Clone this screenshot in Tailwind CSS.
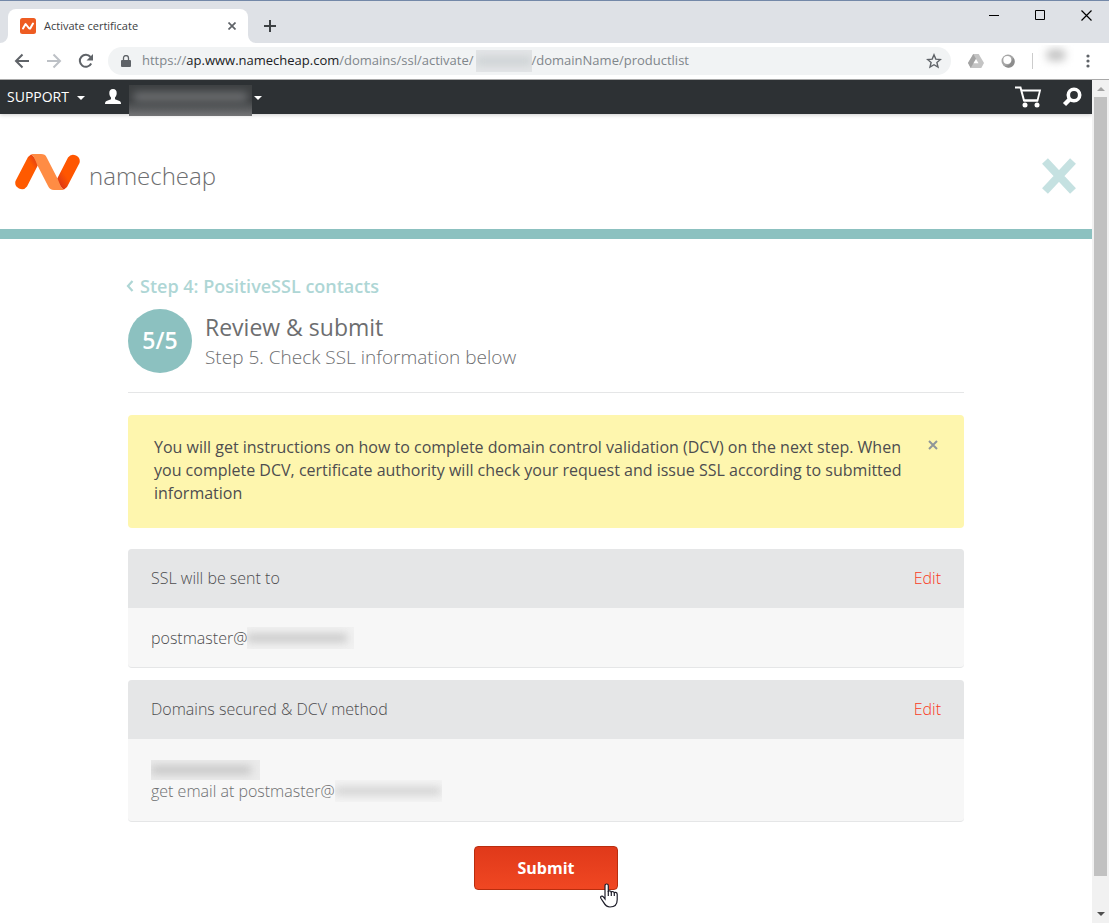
<!DOCTYPE html>
<html lang="en">
<head>
  <meta charset="UTF-8" />
  <meta name="viewport" content="width=device-width, initial-scale=1.0" />
  <title>Activate certificate</title>
  <script src="https://cdn.jsdelivr.net/npm/@tailwindcss/browser@4"></script>
</head>
<body class="flex flex-col h-screen overflow-hidden bg-white font-['Open_Sans',sans-serif] text-[#4d4d4f]">

  <!-- Browser tabs -->
  <div class="flex items-start h-[43px] shrink-0 bg-[#dee1e6] border-t border-[#7388a8]">
    <div class="relative flex items-center ml-2 mt-2 h-[34px] w-60 pl-3 pr-2 bg-white rounded-t-lg text-[11px] text-[#3c4043]">
      <svg class="absolute -left-2 bottom-0 size-2" viewBox="0 0 8 8"><path d="M8 0v8H0a8 8 0 0 0 8-8z" fill="#fff"/></svg>
      <svg class="absolute -right-2 bottom-0 size-2" viewBox="0 0 8 8"><path d="M0 0v8h8a8 8 0 0 1-8-8z" fill="#fff"/></svg>
      <svg class="size-4 mr-2" viewBox="0 0 16 16"><rect width="16" height="16" rx="2.500" fill="#ee5c22"/><path d="M3 10.500 5.600 6l3.600 4.500h1L13 5.500" fill="none" stroke="#fff" stroke-width="2" stroke-linecap="round" stroke-linejoin="round"/></svg>
      <span class="grow">Activate certificate</span>
      <button class="flex items-center justify-center size-4" aria-label="Close tab">
        <svg class="size-2" viewBox="0 0 8 8"><path d="m.5.5 7 7m0-7-7 7" stroke="#5f6368" stroke-width="1.700"/></svg>
      </button>
    </div>
    <button class="ml-4 mt-[19px]" aria-label="New tab">
      <svg class="size-3" viewBox="0 0 12 12"><path d="M6 0v12M0 6h12" stroke="#3c4043" stroke-width="2"/></svg>
    </button>
    <div class="flex items-center ml-auto h-7 gap-9 mr-[17px]">
      <button aria-label="Minimize"><svg class="size-[10px]" viewBox="0 0 10 10"><path d="M0 5.500h10" stroke="#000"/></svg></button>
      <button aria-label="Maximize"><svg class="size-[10px]" viewBox="0 0 10 10"><path d="M.5.5h9v9h-9z" fill="none" stroke="#000"/></svg></button>
      <button aria-label="Close window"><svg class="size-[11px]" viewBox="0 0 11 11"><path d="m.5.5 10 10m0-10-10 10" stroke="#000" stroke-width="1.200"/></svg></button>
    </div>
  </div>

  <!-- Address bar -->
  <div class="flex items-center h-[37px] shrink-0 pl-[14px] pr-[19px] bg-white border-b border-[#a9a9a9]">
    <button aria-label="Back"><svg class="size-4" viewBox="0 0 16 16"><path d="M15 8H2m6.500-6.500L2 8l6.500 6.500" fill="none" stroke="#5f6368" stroke-width="2"/></svg></button>
    <button class="ml-4" aria-label="Forward"><svg class="size-4" viewBox="0 0 16 16"><path d="M1 8h13M7.500 1.500 14 8l-6.500 6.500" fill="none" stroke="#bdc1c6" stroke-width="2"/></svg></button>
    <button class="ml-4" aria-label="Reload"><svg class="size-4" viewBox="0 0 16 16"><path d="M13.200 10.500A6 6 0 1 1 12.500 4" fill="none" stroke="#5f6368" stroke-width="2"/><path d="M15 1v6.500H8.500z" fill="#5f6368"/></svg></button>
    <div class="flex items-center grow ml-[14px] h-7 pl-3 pr-[10px] rounded-full bg-[#f1f3f4] text-[13px] text-[#80868b]">
      <svg class="w-[10px] h-3 ml-px mr-[11px]" viewBox="0 0 10 12"><path d="M1 5h8a1 1 0 0 1 1 1v5a1 1 0 0 1-1 1H1a1 1 0 0 1-1-1V6a1 1 0 0 1 1-1z" fill="#5f6368"/><path d="M2.500 5V3a2.500 2.500 0 0 1 5 0v2" fill="none" stroke="#5f6368" stroke-width="1.300"/></svg>
      <span>https://</span><span class="text-[#202124]">ap.www.namecheap.com</span><span>/domains/ssl/activate/</span>
      <span class="ml-[2px] w-14 h-[22px] bg-[#e3e5e7] overflow-hidden flex items-center"><span class="w-full h-2 bg-[#cbd0d2] blur-xs"></span></span>
      <span>/domainName/productlist</span>
      <button class="ml-auto -mr-px" aria-label="Bookmark"><svg class="size-4" viewBox="0 0 16 16"><path d="m8 1.800 1.800 4.300 4.600.4-3.500 3 1.100 4.600L8 11.700l-4 2.400 1.100-4.600-3.500-3 4.600-.4z" fill="none" stroke="#5f6368" stroke-width="1.400"/></svg></button>
    </div>
    <svg class="w-4 h-[14px] ml-[17px]" viewBox="0 0 16 14"><path d="M5.300 0h5.400L16 9l-2.700 5H2.700L0 9z" fill="#c4c4c4"/><path d="M5.300 0 8 4.700 2.700 14 0 9z" fill="#a3a3a3"/><path d="m8 5 2.500 4.300h-5z" fill="#fff"/></svg>
    <svg class="size-[14px] ml-[17px]" viewBox="0 0 14 14"><circle cx="7" cy="7" r="6.500" fill="#a6a6a6"/><circle cx="6.300" cy="6" r="4" fill="#fff"/><path d="M12 3.500a6 6 0 0 1-8.500 8.500C7.500 12 11 8.500 12 3.500z" fill="#8c8c8c"/></svg>
    <span class="w-px h-4 ml-[17px] bg-[#ccc]"></span>
    <span class="w-9 h-8 ml-[5px] overflow-hidden flex justify-center"><span class="w-5 h-3 mt-1 rounded-full bg-[#c4c4c4] blur-xs"></span></span>
    <button class="ml-3" aria-label="Menu"><svg class="w-1 h-[14px]" viewBox="0 0 4 14" fill="#5f6368"><circle cx="2" cy="2" r="1.600"/><circle cx="2" cy="7" r="1.600"/><circle cx="2" cy="12" r="1.600"/></svg></button>
  </div>

  <div class="flex grow min-h-0">
    <div class="grow overflow-hidden">
      <!-- Account bar -->
      <nav class="relative flex items-center h-[34px] pl-[7px] pr-[10px] bg-[#2d3134] text-white text-[14px] shadow-[0_1px_4px_rgba(0,0,0,0.2)]">
        <a href="#" class="pb-[2px]">SUPPORT</a>
        <svg class="w-2 h-1 mt-[2px] ml-2" viewBox="0 0 8 4"><path d="M0 0h8L4 4z" fill="#fff"/></svg>
        <svg class="size-4 ml-5" viewBox="0 0 16 16"><path d="M8 0c2.600 0 3.800 1.800 3.700 4.200-.1 2-.8 3.400-1.700 4.300v1.700l4.500 1.700c1 .4 1.500 1.300 1.500 3.100H0c0-1.800.5-2.700 1.500-3.100L6 10.200V8.500c-.9-.9-1.600-2.300-1.700-4.300C4.200 1.800 5.400 0 8 0z" fill="#fff"/></svg>
        <span class="self-start mt-[5px] ml-2 w-[123px] h-[31px] overflow-hidden bg-linear-to-b from-[#3c3f41] from-50% to-[#747577]"><span class="block mx-1 mt-[7px] h-[10px] rounded bg-[#6c6e70] blur-xs"></span></span>
        <svg class="w-2 h-1 mt-[2px] ml-[2px]" viewBox="0 0 8 4"><path d="M0 0h8L4 4z" fill="#fff"/></svg>
        <button class="ml-auto" aria-label="Cart"><svg class="w-[27px] h-[22px]" viewBox="0 0 27 22"><path d="M0 1.500h5.500l3.500 13h14" fill="none" stroke="#fff" stroke-width="2"/><path d="M6.500 4.500h18.500l-2.500 10H9" fill="none" stroke="#fff" stroke-width="1.800"/><circle cx="10" cy="19" r="2.500" fill="#fff"/><circle cx="22" cy="19" r="2.500" fill="#fff"/></svg></button>
        <button class="ml-5" aria-label="Search"><svg class="size-5" viewBox="0 0 20 20"><circle cx="12" cy="8" r="5.700" fill="none" stroke="#fff" stroke-width="3.600"/><path d="m8 12-5.500 5.500" stroke="#fff" stroke-width="4.500"/></svg></button>
      </nav>

      <header class="flex items-center justify-between h-[125px] pl-[14px] pr-4 border-b-10 border-[#8cc1c0]">
        <a href="#" class="flex items-center gap-2 text-[24px] leading-9 font-light text-[#6d6e70]">
          <svg class="w-[67px] h-9" viewBox="0 0 67 36">
            <defs>
              <linearGradient id="l" x1="0" y1="1" x2="1" y2="0"><stop offset=".7" stop-color="#ff5a00"/><stop offset="1" stop-color="#d4301f"/></linearGradient>
              <linearGradient id="r" x1="1" y1="0" x2="0" y2="1"><stop offset=".6" stop-color="#ff5600"/><stop offset="1" stop-color="#cd2a20"/></linearGradient>
            </defs>
            <path d="M17 .5C19 1 22 5 24 11L13 32.500A6.500 6.500 0 0 1 1.500 27L14 3z" fill="url(#l)"/>
            <path d="M50 35.500C48 35 45 31 43 25L54 3.500A6.500 6.500 0 0 1 65.500 9L53 33z" fill="url(#r)"/>
            <path d="M17 0h10c3 0 4.500 1 5.700 3.400L44 25.500C46 31 48 35 50 36H40c-3 0-4.500-1-5.700-3.400L23 10.500C21 5 19 1 17 0z" fill="#ff8c44"/>
          </svg>
          <span class="pt-2">namecheap</span>
        </a>
        <button class="pt-2" aria-label="Close"><svg class="w-[34px] h-9" viewBox="0 0 34 36"><path d="m3 3 28 30M31 3 3 33" stroke="#c5e1e1" stroke-width="8"/></svg></button>
      </header>

      <main class="max-w-[836px] mx-auto pt-[35px]">
        <a href="#" class="flex items-center gap-[6px] -ml-[2px] h-6 text-[18px] font-semibold text-[#aed6d5]">
          <svg class="w-2 h-3" viewBox="0 0 8 12"><path d="M6.500 1 2 6l4.500 5" fill="none" stroke="currentColor" stroke-width="2.200"/></svg>
          Step 4: PositiveSSL contacts
        </a>
        <div class="flex items-center gap-[13px] mt-[11px] pb-[19px] border-b border-[#e5e6e7]">
          <span class="flex items-center justify-center size-16 pb-[2px] rounded-full bg-[#8cc1c0] text-white text-[23px] font-semibold">5/5</span>
          <div class="pt-[2px]">
            <h1 class="text-[23px] leading-[30px] font-medium text-[#6d6e70]">Review &amp; submit</h1>
            <p class="text-[19px] leading-[30px] font-light text-[#6d6e70]">Step 5. Check SSL information below</p>
          </div>
        </div>

        <div class="flex items-start justify-between mt-[22px] pl-[26px] pr-[26px] pt-[21px] pb-[23px] rounded bg-[#fef6ae]">
          <p class="max-w-[756px] text-[16px] leading-[23px]">You will get instructions on how to complete domain control validation (DCV) on the next step. When you complete DCV, certificate authority will check your request and issue SSL according to submitted information</p>
          <button class="mt-1" aria-label="Dismiss"><svg class="size-[10px]" viewBox="0 0 10 10"><path d="m1 1 8 8m0-8L1 9" stroke="#8f9699" stroke-width="2"/></svg></button>
        </div>

        <section class="mt-[21px] rounded overflow-hidden bg-[#f7f7f7] border-b border-[#e5e6e7] text-[16px] font-light">
          <div class="flex items-center justify-between h-[59px] px-[23px] pb-[2px] bg-[#e5e6e7]">
            <h2>SSL will be sent to</h2>
            <a href="#" class="text-[#fa3c1e]">Edit</a>
          </div>
          <div class="flex items-center h-[59px] px-[23px]">
            <span>postmaster@</span>
            <span class="flex items-center w-[107px] h-[22px] overflow-hidden bg-[#f1f1f1]"><span class="w-[100px] h-2 bg-[#c6c6c6] blur-xs"></span></span>
          </div>
        </section>

        <section class="mt-3 rounded overflow-hidden bg-[#f7f7f7] border-b border-[#e5e6e7] text-[16px] font-light">
          <div class="flex items-center justify-between h-[59px] px-[23px] pb-[2px] bg-[#e5e6e7]">
            <h2>Domains secured &amp; DCV method</h2>
            <a href="#" class="text-[#fa3c1e]">Edit</a>
          </div>
          <div class="px-[23px] pt-[21px] pb-[19px] text-[#6d6e70]">
            <span class="flex items-center w-[109px] h-5 overflow-hidden bg-[#ebebeb]"><span class="w-[100px] h-2 bg-[#c3c3c3] blur-xs"></span></span>
            <div class="flex items-center h-[22px]">
              <span>get email at postmaster@</span>
              <span class="flex items-center w-[107px] h-[22px] overflow-hidden bg-[#f4f4f4]"><span class="w-[106px] h-2 bg-[#d0d0d0] blur-xs"></span></span>
            </div>
          </div>
        </section>

        <div class="relative w-36 mx-auto mt-6">
          <button class="w-full h-11 rounded border border-[#b92d0e] bg-linear-to-b from-[#e0391a] to-[#f04722] text-white text-[16px] font-bold">Submit</button>
          <!-- Pointer -->
          <svg class="absolute left-[126px] top-[37px] w-[18px] h-[25px]" viewBox="0 0 18 25"><path d="M5 16V2.800C5 .4 8.300.4 8.300 2.800V9c0-1.600 3-1.500 3 .5 0-1.500 3-1.300 3 .8 0-1.400 2.900-1.200 2.900 1v5.500c0 4-2 7.200-7.200 7.200-3.600 0-5-2-6.400-4.600L1 15.500c-1.200-2 1-3.200 2.400-1.700z" fill="#fff" stroke="#1c1c28" stroke-width="1.200"/><path d="M8.300 8v5m3-4v4m3-3v3" stroke="#1c1c28" stroke-width="1.200"/></svg>
        </div>
      </main>
    </div>

    <!-- Scrollbar -->
    <div class="flex flex-col items-center w-[17px] shrink-0 bg-[#f1f1f1]">
      <svg class="w-2 h-[17px]" viewBox="0 0 8 17"><path d="M0 11h8L4 7z" fill="#a3a3a3"/></svg>
      <div class="w-[13px] h-[779px] bg-[#c1c1c1]"></div>
      <svg class="w-2 h-[17px] mt-auto" viewBox="0 0 8 17"><path d="M0 6h8l-4 4z" fill="#505050"/></svg>
    </div>
  </div>
</body>
</html>
